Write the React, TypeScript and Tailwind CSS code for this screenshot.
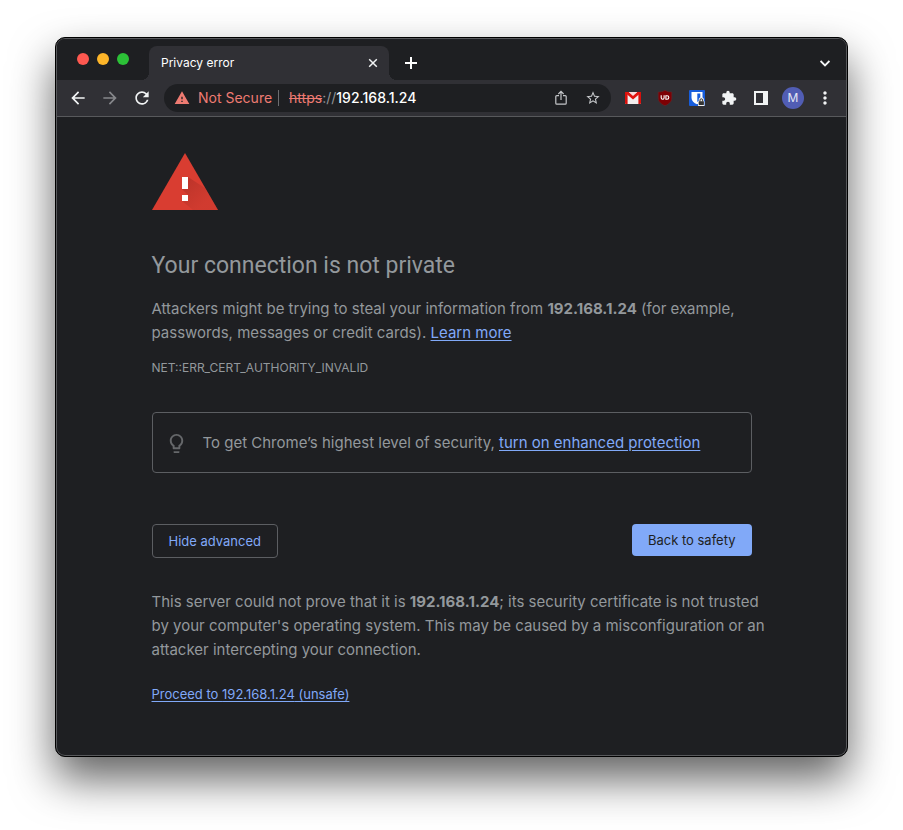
import type { ReactNode } from "react";
import {
  MdArrowBack,
  MdArrowForward,
  MdExtension,
  MdLightbulbOutline,
  MdMoreVert,
  MdRefresh,
  MdStarBorder,
  MdWarning,
} from "react-icons/md";

const HOST = "192.168.1.24";

function ToolButton({ label, children }: { label: string; children: ReactNode }) {
  return (
    <button type="button" aria-label={label} className="flex h-7 w-8 shrink-0 items-center justify-center text-[#f1f3f4]">
      {children}
    </button>
  );
}

function TabStrip() {
  return (
    <div className="flex h-[41px] items-end bg-[#1e1f22]">
      <div className="flex gap-2 self-start pt-[14px] pr-5 pl-5">
        <button type="button" aria-label="Close window" className="size-3 rounded-full bg-[#fe5850]" />
        <button type="button" aria-label="Minimise window" className="size-3 rounded-full bg-[#fdb529]" />
        <button type="button" aria-label="Zoom window" className="size-3 rounded-full bg-[#2cc137]" />
      </div>
      <div className="relative flex h-[34px] w-60 items-center justify-between rounded-t-lg bg-[#303035] pr-[11px] pl-3">
        <span className="absolute bottom-0 -left-2 size-2 bg-[radial-gradient(circle_at_0_0,transparent_8px,#303035_8px)]" />
        <span className="absolute -right-2 bottom-0 size-2 bg-[radial-gradient(circle_at_100%_0,transparent_8px,#303035_8px)]" />
        <span className="text-xs text-white">Privacy error</span>
        <button type="button" aria-label="Close tab" className="text-[#f1f3f4]">
          <svg width="10" height="10" viewBox="0 0 10 10" stroke="currentColor" strokeWidth="1.5" fill="none">
            <path d="M1.200 1.200l7.600 7.600M8.800 1.200l-7.600 7.600" />
          </svg>
        </button>
      </div>
      <button type="button" aria-label="New tab" className="ml-4 flex h-[34px] items-center text-white">
        <svg width="12" height="12" viewBox="0 0 12 12" stroke="currentColor" strokeWidth="2" fill="none">
          <path d="M6 0v12M0 6h12" />
        </svg>
      </button>
      <button type="button" aria-label="Search tabs" className="mr-4 ml-auto flex h-[34px] items-center text-[#f1f3f4]">
        <svg width="10" height="7" viewBox="0 0 10 7" stroke="currentColor" strokeWidth="1.8" fill="none">
          <path d="M0.6 1L5 5.400 9.400 1" />
        </svg>
      </button>
    </div>
  );
}

function GmailIcon() {
  return (
    <svg width="16" height="12" viewBox="0 0 16 12">
      <rect width="16" height="12" rx="0.8" fill="#f3eeee" />
      <path d="M0 0h2.600v12H0.800a.8.8 0 0 1-.8-.8zM16 0h-2.600v12h1.800a.8.8 0 0 0 .8-.8z" fill="#d8100c" />
      <path d="M1 0h2.800L8 3.800 12.200 0H15v1.500L8 7.400 1 1.500z" fill="#e0140f" />
      <path d="M3.800 0h8.400L8 3.800z" fill="#f6dddd" />
    </svg>
  );
}

function ShieldIcon() {
  return (
    <svg width="16" height="16" viewBox="0 0 16 16">
      <path d="M8 0.300C6 1.700 3.500 2 1.200 2v6c0 4 3 6 6.800 7.800C11.800 14 14.800 12 14.800 8V2C12.500 2 10 1.700 8 .3z" fill="#7d0004" stroke="#5f2c2f" strokeWidth=".6" />
      <path d="M4.200 5.300v2.500c0 .9.500 1.400 1.400 1.400s1.500-.5 1.500-1.400V5.300" fill="none" stroke="#fff" strokeWidth="1.100" />
      <path d="M8.900 5.800h1.200a1.700 1.700 0 0 1 0 3.400H8.900z" fill="none" stroke="#fff" strokeWidth="1.100" />
    </svg>
  );
}

function VaultIcon() {
  return (
    <svg width="16" height="16" viewBox="0 0 16 16">
      <rect width="16" height="16" rx="1" fill="#175ddc" />
      <path d="M2.500 2h11v6c0 3-2.500 5-5.500 6.300C5 13 2.500 11 2.500 8z" fill="#fff" />
      <path d="M8.300 3.600h3V8c0 2-1 3-3 4z" fill="#175ddc" />
      <path d="M9.700 11.200V9.800a2.600 2.600 0 0 1 5.200 0v1.400h.6v4.800H9v-4.800z" fill="#eee" />
      <path d="M11 11.500v-1.400a1.300 1.300 0 0 1 2.600 0v1.400" fill="none" stroke="#333" strokeWidth="1" />
      <rect x="9.700" y="11.200" width="5.200" height="3.800" rx=".4" fill="#333" />
    </svg>
  );
}

function Toolbar() {
  return (
    <div className="flex items-center border-b border-[#58595c] bg-[#303035] px-[5px] py-1">
      <ToolButton label="Back"><MdArrowBack size={20} /></ToolButton>
      <ToolButton label="Forward"><MdArrowForward size={20} className="text-[#85868a]" /></ToolButton>
      <ToolButton label="Reload"><MdRefresh size={20} /></ToolButton>
      <div className="mx-[6px] flex h-7 min-w-0 flex-1 items-center rounded-full bg-[#1e1f22] pr-[2px] pl-[10px] text-sm">
        <button type="button" className="flex shrink-0 items-center gap-2 text-[#ee7b72]">
          <MdWarning size={16} />
          <span>Not Secure</span>
        </button>
        <span className="mr-[10px] ml-[6px] h-4 w-px bg-[#6c6d70]" />
        <label htmlFor="address" className="text-[#909396]">
          <span className="text-[#ee7b72] line-through">https</span>://
        </label>
        <input id="address" type="text" defaultValue={HOST} className="min-w-0 flex-1 bg-transparent font-medium text-white outline-none" />
        <button type="button" aria-label="Share" className="flex h-7 w-8 items-center justify-center text-[#c4c6c9]">
          <svg width="12" height="16" viewBox="0 0 12 16" fill="none" stroke="currentColor" strokeWidth="1.200">
            <path d="M4 5.600H1.800a1 1 0 0 0-1 1v6.600a1 1 0 0 0 1 1h8.400a1 1 0 0 0 1-1V6.600a1 1 0 0 0-1-1H8M6 10V1.800M3.400 4L6 1.400 8.600 4" />
          </svg>
        </button>
        <button type="button" aria-label="Bookmark this page" className="flex h-7 w-8 items-center justify-center text-[#c4c6c9]">
          <MdStarBorder size={16} />
        </button>
      </div>
      <ToolButton label="Gmail"><GmailIcon /></ToolButton>
      <ToolButton label="Content blocker"><ShieldIcon /></ToolButton>
      <ToolButton label="Password vault"><VaultIcon /></ToolButton>
      <ToolButton label="Extensions"><MdExtension size={16} /></ToolButton>
      <ToolButton label="Side panel">
        <svg width="14" height="14" viewBox="0 0 14 14" fill="currentColor">
          <path fillRule="evenodd" d="M0 0h14v14H0zM2 2v10h7V2z" />
        </svg>
      </ToolButton>
      <ToolButton label="Profile">
        <span className="flex size-[22px] items-center justify-center rounded-full bg-[#515db4] text-xs text-[#e4e6f5]">M</span>
      </ToolButton>
      <ToolButton label="Menu"><MdMoreVert size={20} /></ToolButton>
    </div>
  );
}

function TextLink({ children }: { children: ReactNode }) {
  return (
    <a href="#" className="text-[#81a9f8] underline underline-offset-2">
      {children}
    </a>
  );
}

function ErrorPage() {
  return (
    <main className="mx-auto max-w-[600px] pt-9 pb-[49px] text-[15px] leading-6 text-[#93989c]">
      <svg width="66" height="57" viewBox="0 0 66 57" role="img" aria-label="Warning">
        <defs>
          <linearGradient id="cast" x1="33" y1="28" x2="54" y2="49" gradientUnits="userSpaceOnUse">
            <stop offset="0" stopColor="#a82d24" stopOpacity=".6" />
            <stop offset="1" stopColor="#b8352b" stopOpacity=".25" />
          </linearGradient>
        </defs>
        <path d="M33 0l33 57H0z" fill="#d93d31" />
        <path d="M36 24l17 11 13 22H41L30 48l6-6-6-6z" fill="url(#cast)" />
        <path d="M30 24h6v12h-6zM30 42h6v6h-6z" fill="#fff" />
      </svg>
      <h1 className="mt-[41px] font-['Roboto',sans-serif] text-[23px] leading-[30px]">Your connection is not private</h1>
      <p className="mt-4">
        Attackers might be trying to steal your information from <strong>{HOST}</strong> (for example, passwords,
        messages or credit cards). <TextLink>Learn more</TextLink>
      </p>
      <p className="mt-[14px] text-xs leading-[18px]">NET::ERR_CERT_AUTHORITY_INVALID</p>
      <div className="mt-[35px] flex items-center gap-[15px] rounded-sm border border-[#5c5e62] pt-[18px] pr-4 pb-[17px] pl-3">
        <MdLightbulbOutline size={23} className="shrink-0 text-[#66686b]" />
        <p>
          To get Chrome’s highest level of security, <TextLink>turn on enhanced protection</TextLink>
        </p>
      </div>
      <div className="mt-[51px] flex items-start justify-between text-[13px]">
        <button type="button" className="rounded-sm border border-[#5c5e62] px-4 py-1 text-[#81a9f8]">
          Hide advanced
        </button>
        <button type="button" className="rounded-sm bg-[#81a9f8] px-4 py-1 text-[#1e1f22]">
          Back to safety
        </button>
      </div>
      <p className="-mr-4 mt-8">
        This server could not prove that it is <strong>{HOST}</strong>; its security certificate is not trusted by your
        computer's operating system. This may be caused by a misconfiguration or an attacker intercepting your
        connection.
      </p>
      <p className="mt-5 text-[13px]">
        <TextLink>Proceed to {HOST} (unsafe)</TextLink>
      </p>
    </main>
  );
}

export default function App() {
  return (
    <div className="min-h-screen bg-white px-[55px] pt-[37px] pb-[73px] font-['Inter','Liberation_Sans',sans-serif]">
      <div className="overflow-hidden rounded-[10px] border border-black bg-[#1e1f22] shadow-[0_22px_44px_rgba(0,0,0,0.62)]">
        <div className="overflow-hidden rounded-[9px] border border-[#58595c]">
          <TabStrip />
          <Toolbar />
          <ErrorPage />
        </div>
      </div>
    </div>
  );
}
